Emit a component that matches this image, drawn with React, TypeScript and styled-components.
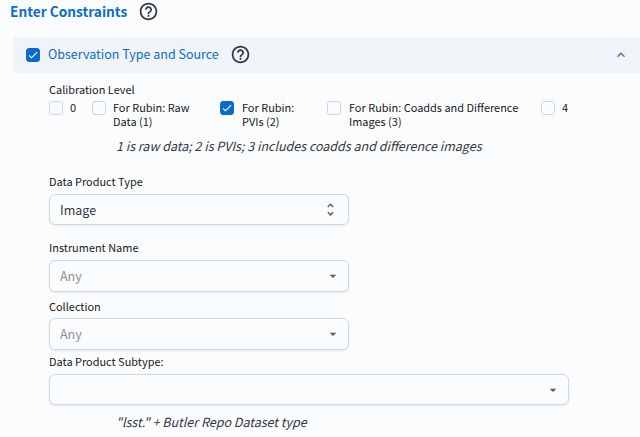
import React from 'react';
import styled, { createGlobalStyle } from 'styled-components';

const GlobalStyle = createGlobalStyle`
  * { box-sizing: border-box; }
  body {
    margin: 0;
    background: #fbfcfe;
    color: #171a1c;
    font-family: "Noto Sans CJK SC", "Noto Sans", sans-serif;
    overflow: hidden;
  }
`;

const Page = styled.main`
  height: 437px;
  display: flex;
  flex-direction: column;
`;

const TitleRow = styled.header`
  display: flex;
  align-items: center;
  gap: 10px;
  height: 23px;
  padding-left: 10px;
`;

const Title = styled.h1`
  width: 118px;
  margin: 0;
  color: #0b6bcb;
  font-size: 13.7px;
  font-weight: 700;
  line-height: 22px;
  padding-bottom: 1px;
  white-space: nowrap;
`;

const SectionHeader = styled.div`
  display: flex;
  align-items: center;
  height: 36px;
  margin: 14px 0 0 14px;
  padding: 0 11px 0 12px;
  background: #f0f4f8;
`;

const SectionHeading = styled.div`
  display: flex;
  align-items: center;
  gap: 10px;
  margin-left: 8px;
  padding-bottom: 2px;
`;

const SectionTitle = styled.h2`
  width: 172px;
  margin: 0;
  color: #0b6bcb;
  font-size: 12.5px;
  font-weight: 400;
  line-height: 22px;
  white-space: nowrap;
`;

const Chevron = styled.svg`
  margin-left: auto;
`;

const Box = styled.span<{ $checked?: boolean }>`
  display: flex;
  flex: none;
  align-items: center;
  justify-content: center;
  width: 14px;
  height: 14px;
  border: 1px solid ${(p) => (p.$checked ? '#0b6bcb' : '#cdd7e1')};
  border-radius: 3px;
  background: ${(p) => (p.$checked ? '#0b6bcb' : '#fbfcfe')};
`;

const Form = styled.section`
  display: flex;
  flex-direction: column;
  padding: 9px 0 0 49px;
`;

const Label = styled.div`
  height: 16px;
  font-size: 10.95px;
  line-height: 14px;
  white-space: nowrap;
`;

const Options = styled.div`
  display: grid;
  grid-template-columns: 43px 128px 107px 214px 60px;
  height: 28px;
  margin-top: 3px;
`;

const Option = styled.label<{ $gap: number }>`
  display: flex;
  gap: ${(p) => p.$gap}px;
  font-size: 10.95px;
  line-height: 14px;
  white-space: pre;
`;

const OptionText = styled.span`
  margin-top: -1px;
`;

const Hint = styled.div<{ $top: number }>`
  margin: ${(p) => p.$top}px 0 0 67px;
  height: 20px;
  color: #32383e;
  font-size: 12.5px;
  font-style: italic;
  line-height: 20px;
  white-space: nowrap;
`;

const Field = styled.div<{ $top: number; $gap?: number }>`
  display: flex;
  flex-direction: column;
  gap: ${(p) => p.$gap ?? 4}px;
  margin-top: ${(p) => p.$top}px;
`;

const Select = styled.div<{ $width: number; $height: number; $muted?: boolean }>`
  display: flex;
  align-items: center;
  justify-content: space-between;
  width: ${(p) => p.$width}px;
  height: ${(p) => p.$height}px;
  padding: 0 ${(p) => (p.$muted ? 7 : 9)}px 0 10px;
  border: 1px solid #cdd7e1;
  border-radius: 6px;
  background: #fbfcfe;
  box-shadow: 0 1px 2px rgba(21, 21, 21, 0.08);
  color: ${(p) => (p.$muted ? '#8b8f94' : '#32383e')};
  font-size: 12.5px;
  line-height: 20px;
`;

const Check = ({ checked }: { checked?: boolean }) => (
  <Box $checked={checked}>
    {checked && (
      <svg width="12" height="12" viewBox="0 0 24 24" fill="#fff">
        <path d="M9 16.17 4.83 12l-1.42 1.41L9 19 21 7l-1.41-1.41z" />
      </svg>
    )}
  </Box>
);

const Help = () => (
  <svg width="21" height="21" viewBox="0 0 24 24" fill="#32383e">
    <path d="M11 18h2v-2h-2v2zm1-16C6.48 2 2 6.48 2 12s4.48 10 10 10 10-4.48 10-10S17.52 2 12 2zm0 18c-4.41 0-8-3.59-8-8s3.59-8 8-8 8 3.59 8 8-3.59 8-8 8zm0-14c-2.21 0-4 1.79-4 4h2c0-1.1.9-2 2-2s2 .9 2 2c0 2-3 1.75-3 5h2c0-2.25 3-2.5 3-5 0-2.21-1.79-4-4-4z" />
  </svg>
);

const Unfold = () => (
  <svg width="17" height="17" viewBox="0 0 24 24" fill="#555e68">
    <path d="M12 5.83 15.17 9l1.41-1.41L12 3 7.41 7.59 8.83 9 12 5.83zm0 12.34L8.83 15l-1.41 1.41L12 21l4.59-4.59L15.17 15 12 18.17z" />
  </svg>
);

const DropArrow = () => (
  <svg width="16" height="16" viewBox="0 0 24 24" fill="#555e68">
    <path d="m7 10 5 5 5-5z" />
  </svg>
);

const levels = [
  { text: '0', gap: 7 },
  { text: 'For Rubin: Raw\nData (1)', gap: 7 },
  { text: 'For Rubin:\nPVIs (2)', gap: 8, checked: true },
  { text: 'For Rubin: Coadds and Difference\nImages (3)', gap: 8 },
  { text: '4', gap: 7 },
];

export default function App() {
  return (
    <Page>
      <GlobalStyle />
      <TitleRow>
        <Title>Enter Constraints</Title>
        <Help />
      </TitleRow>
      <SectionHeader>
        <Check checked />
        <SectionHeading>
          <SectionTitle>Observation Type and Source</SectionTitle>
          <Help />
        </SectionHeading>
        <Chevron width="16" height="16" viewBox="0 0 24 24" fill="#636b74">
          <path d="m12 8-6 6 1.41 1.41L12 10.83l4.59 4.58L18 14z" />
        </Chevron>
      </SectionHeader>
      <Form>
        <Label>Calibration Level</Label>
        <Options>
          {levels.map((level) => (
            <Option key={level.text} $gap={level.gap}>
              <Check checked={level.checked} />
              <OptionText>{level.text}</OptionText>
            </Option>
          ))}
        </Options>
        <Hint $top={7}>1 is raw data; 2 is PVIs; 3 includes coadds and difference images</Hint>
        <Field $top={18}>
          <Label>Data Product Type</Label>
          <Select $width={300} $height={31}>
            <span>Image</span>
            <Unfold />
          </Select>
        </Field>
        <Field $top={15}>
          <Label>Instrument Name</Label>
          <Select $width={300} $height={32} $muted>
            <span>Any</span>
            <DropArrow />
          </Select>
        </Field>
        <Field $top={7} $gap={3}>
          <Label>Collection</Label>
          <Select $width={300} $height={32} $muted>
            <span>Any</span>
            <DropArrow />
          </Select>
        </Field>
        <Field $top={4}>
          <Label>Data Product Subtype:</Label>
          <Select $width={520} $height={31} $muted>
            <span />
            <DropArrow />
          </Select>
        </Field>
        <Hint $top={7}>"lsst." + Butler Repo Dataset type</Hint>
      </Form>
    </Page>
  );
}
